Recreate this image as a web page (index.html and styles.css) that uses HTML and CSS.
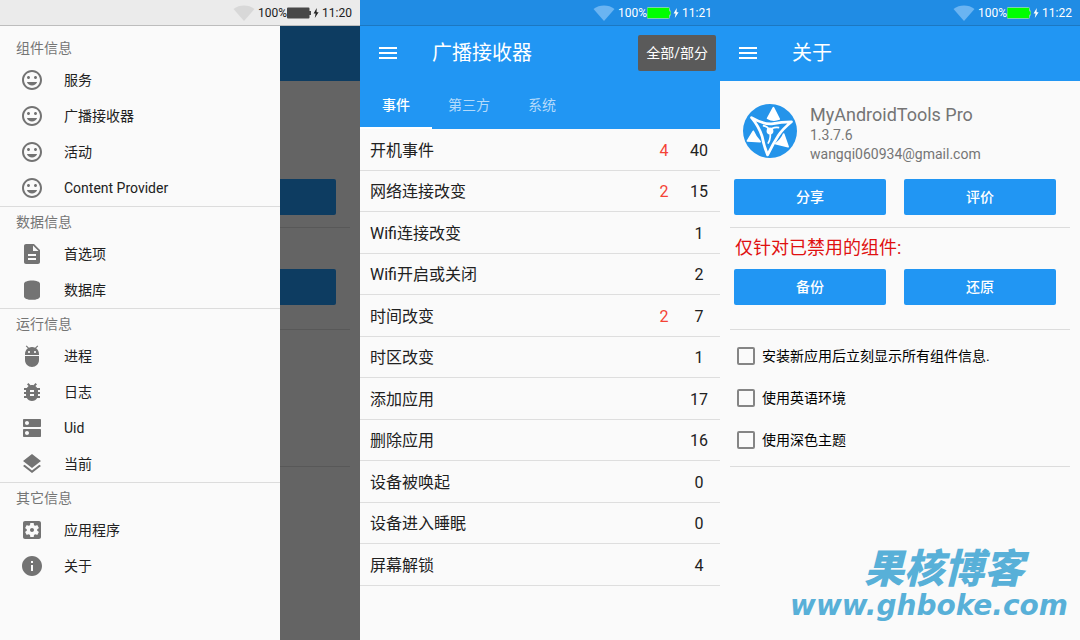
FILE: index.html
```html
<!DOCTYPE html>
<html lang="zh-CN">
<head>
<meta charset="utf-8">
<meta name="viewport" content="width=device-width, initial-scale=1">
<title>MyAndroidTools Pro</title>
<link rel="stylesheet" href="styles.css">
</head>
<body>
<svg class="sprite" aria-hidden="true">
  <symbol id="i-face" viewBox="0 0 24 24"><path d="M11.99 2C6.47 2 2 6.48 2 12s4.47 10 9.99 10C17.52 22 22 17.52 22 12S17.52 2 11.99 2zM12 20c-4.42 0-8-3.58-8-8s3.58-8 8-8 8 3.58 8 8-3.58 8-8 8zm3.5-9c.83 0 1.5-.67 1.5-1.5S16.33 8 15.5 8 14 8.67 14 9.5s.67 1.5 1.5 1.5zm-7 0c.83 0 1.5-.67 1.5-1.5S9.33 8 8.5 8 7 8.67 7 9.5 7.67 11 8.5 11zm3.5 6.5c2.33 0 4.31-1.46 5.11-3.5H6.89c.8 2.04 2.78 3.5 5.11 3.5z"/></symbol>
  <symbol id="i-doc" viewBox="0 0 24 24"><path d="M14 2H6c-1.1 0-1.99.9-1.99 2L4 20c0 1.1.89 2 1.99 2H18c1.1 0 2-.9 2-2V8l-6-6zm2 16H8v-2h8v2zm0-4H8v-2h8v2zm-3-5V3.5L18.5 9H13z"/></symbol>
  <symbol id="i-db" viewBox="0 0 24 24"><path d="M4 5.6C4 3.7 7.6 2.4 12 2.4s8 1.3 8 3.2v12.8c0 1.9-3.6 3.4-8 3.4s-8-1.5-8-3.4z"/></symbol>
  <symbol id="i-adb" viewBox="0 0 24 24"><path d="M5 16c0 3.87 3.13 7 7 7s7-3.13 7-7v-4H5v4zM16.12 4.37l2.1-2.1-.82-.83-2.3 2.31C14.16 3.28 13.12 3 12 3s-2.16.28-3.09.75L6.6 1.44l-.82.83 2.1 2.1C6.14 5.64 5 7.68 5 10v1h14v-1c0-2.32-1.14-4.36-2.88-5.63zM9 9c-.55 0-1-.45-1-1s.45-1 1-1 1 .45 1 1-.45 1-1 1zm6 0c-.55 0-1-.45-1-1s.45-1 1-1 1 .45 1 1-.45 1-1 1z"/></symbol>
  <symbol id="i-bug" viewBox="0 0 24 24"><path d="M20 8h-2.81c-.45-.78-1.07-1.45-1.82-1.96L17 4.41 15.59 3l-2.17 2.17C12.96 5.06 12.49 5 12 5c-.49 0-.96.06-1.41.17L8.41 3 7 4.41l1.62 1.63C7.88 6.55 7.26 7.22 6.81 8H4v2h2.09c-.05.33-.09.66-.09 1v1H4v2h2v1c0 .34.04.67.09 1H4v2h2.81c1.04 1.79 2.97 3 5.19 3s4.15-1.21 5.19-3H20v-2h-2.09c.05-.33.09-.66.09-1v-1h2v-2h-2v-1c0-.34-.04-.67-.09-1H20V8zm-6 8h-4v-2h4v2zm0-4h-4v-2h4v2z"/></symbol>
  <symbol id="i-dns" viewBox="0 0 24 24"><path d="M20 13H4c-.55 0-1 .45-1 1v6c0 .55.45 1 1 1h16c.55 0 1-.45 1-1v-6c0-.55-.45-1-1-1zM7 19c-1.1 0-2-.9-2-2s.9-2 2-2 2 .9 2 2-.9 2-2 2zM20 3H4c-.55 0-1 .45-1 1v6c0 .55.45 1 1 1h16c.55 0 1-.45 1-1V4c0-.55-.45-1-1-1zM7 9c-1.1 0-2-.9-2-2s.9-2 2-2 2 .9 2 2-.9 2-2 2z"/></symbol>
  <symbol id="i-layers" viewBox="0 0 24 24"><path d="M11.99 18.54l-7.37-5.73L3 14.07l9 7 9-7-1.63-1.27-7.38 5.74zM12 16l7.36-5.73L21 9l-9-7-9 7 1.63 1.27L12 16z"/></symbol>
  <symbol id="i-apps" viewBox="0 0 24 24"><path d="M12 10c-1.1 0-2 .9-2 2s.9 2 2 2 2-.9 2-2-.9-2-2-2zm7-7H5c-1.11 0-2 .9-2 2v14c0 1.1.89 2 2 2h14c1.11 0 2-.9 2-2V5c0-1.1-.89-2-2-2zm-1.75 9c0 .23-.02.46-.05.68l1.48 1.16c.13.11.17.3.08.45l-1.4 2.42c-.09.15-.27.21-.43.15l-1.74-.7c-.36.28-.76.51-1.18.69l-.26 1.85c-.03.17-.18.3-.35.3h-2.8c-.17 0-.32-.13-.35-.29l-.26-1.85c-.43-.18-.82-.41-1.18-.69l-1.74.7c-.16.06-.34 0-.43-.15l-1.4-2.42c-.09-.15-.05-.34.08-.45l1.48-1.16c-.03-.23-.05-.46-.05-.69 0-.23.02-.46.05-.68l-1.48-1.16c-.13-.11-.17-.3-.08-.45l1.4-2.42c.09-.15.27-.21.43-.15l1.74.7c.36-.28.76-.51 1.18-.69l.26-1.85c.03-.17.18-.3.35-.3h2.8c.17 0 .32.13.35.29l.26 1.85c.43.18.82.41 1.18.69l1.74-.7c.16-.06.34 0 .43.15l1.4 2.42c.09.15.05.34-.08.45l-1.48 1.16c.03.23.05.46.05.69z"/></symbol>
  <symbol id="i-info" viewBox="0 0 24 24"><path d="M12 2C6.48 2 2 6.48 2 12s4.48 10 10 10 10-4.48 10-10S17.52 2 12 2zm1 15h-2v-6h2v6zm0-8h-2V7h2v2z"/></symbol>
  <symbol id="i-menu" viewBox="0 0 24 24"><path d="M3 18h18v-2H3v2zm0-5h18v-2H3v2zm0-7v2h18V6H3z"/></symbol>
  <symbol id="i-wifi" viewBox="0 0 22 16"><path d="M.5 4C6.5-.6 15.5-.6 21.5 4L11 16z"/></symbol>
  <symbol id="i-battery" viewBox="0 0 24 12"><path d="M1 .5h20.5q1 0 1 1V4H24v4h-1.500v2.500q0 1-1 1H1q-1 0-1-1v-9q0-1 1-1z"/></symbol>
  <symbol id="i-bolt" viewBox="0 0 6 10"><path d="M3.700 0L.6 5.400h2L1.800 10 5.600 4.200h-2z"/></symbol>
</svg>

<main class="screens">
  <section class="phone">
    <div class="status status-light">
      <svg class="wifi"><use href="#i-wifi"/></svg><span>100%</span><svg class="battery"><use href="#i-battery"/></svg><svg class="bolt"><use href="#i-bolt"/></svg><span>11:20</span>
    </div>
    <div class="split">
      <nav class="drawer">
        <div class="group">
          <h2 class="group-title">组件信息</h2>
          <a class="item" href="#"><svg class="icon"><use href="#i-face"/></svg>服务</a>
          <a class="item" href="#"><svg class="icon"><use href="#i-face"/></svg>广播接收器</a>
          <a class="item" href="#"><svg class="icon"><use href="#i-face"/></svg>活动</a>
          <a class="item" href="#"><svg class="icon"><use href="#i-face"/></svg>Content Provider</a>
        </div>
        <div class="group">
          <h2 class="group-title">数据信息</h2>
          <a class="item" href="#"><svg class="icon"><use href="#i-doc"/></svg>首选项</a>
          <a class="item" href="#"><svg class="icon"><use href="#i-db"/></svg>数据库</a>
        </div>
        <div class="group">
          <h2 class="group-title">运行信息</h2>
          <a class="item" href="#"><svg class="icon"><use href="#i-adb"/></svg>进程</a>
          <a class="item" href="#"><svg class="icon"><use href="#i-bug"/></svg>日志</a>
          <a class="item" href="#"><svg class="icon"><use href="#i-dns"/></svg>Uid</a>
          <a class="item" href="#"><svg class="icon"><use href="#i-layers"/></svg>当前</a>
        </div>
        <div class="group">
          <h2 class="group-title">其它信息</h2>
          <a class="item" href="#"><svg class="icon"><use href="#i-apps"/></svg>应用程序</a>
          <a class="item" href="#"><svg class="icon"><use href="#i-info"/></svg>关于</a>
        </div>
      </nav>
      <div class="scrim" aria-hidden="true">
        <div class="scrim-bar"></div>
        <div class="scrim-profile"></div>
        <div class="scrim-button"></div>
        <div class="scrim-line"></div>
        <div class="scrim-label"></div>
        <div class="scrim-button"></div>
        <div class="scrim-line scrim-line-far"></div>
        <div class="scrim-options"></div>
        <div class="scrim-line"></div>
      </div>
    </div>
  </section>

  <section class="phone">
    <div class="status">
      <svg class="wifi"><use href="#i-wifi"/></svg><span>100%</span><svg class="battery"><use href="#i-battery"/></svg><svg class="bolt"><use href="#i-bolt"/></svg><span>11:21</span>
    </div>
    <header class="bar">
      <button class="menu" type="button" aria-label="菜单"><svg class="icon"><use href="#i-menu"/></svg></button>
      <h1 class="bar-title">广播接收器</h1>
      <button class="toggle" type="button">全部/部分</button>
    </header>
    <div class="tabs" role="tablist">
      <button class="tab tab-active" type="button" role="tab" aria-selected="true">事件</button>
      <button class="tab" type="button" role="tab" aria-selected="false">第三方</button>
      <button class="tab" type="button" role="tab" aria-selected="false">系统</button>
    </div>
    <table class="events">
      <tbody>
        <tr><td>开机事件</td><td class="off">4</td><td class="count">40</td></tr>
        <tr><td>网络连接改变</td><td class="off">2</td><td class="count">15</td></tr>
        <tr><td>Wifi连接改变</td><td class="off"></td><td class="count">1</td></tr>
        <tr><td>Wifi开启或关闭</td><td class="off"></td><td class="count">2</td></tr>
        <tr><td>时间改变</td><td class="off">2</td><td class="count">7</td></tr>
        <tr><td>时区改变</td><td class="off"></td><td class="count">1</td></tr>
        <tr><td>添加应用</td><td class="off"></td><td class="count">17</td></tr>
        <tr><td>删除应用</td><td class="off"></td><td class="count">16</td></tr>
        <tr><td>设备被唤起</td><td class="off"></td><td class="count">0</td></tr>
        <tr><td>设备进入睡眠</td><td class="off"></td><td class="count">0</td></tr>
        <tr><td>屏幕解锁</td><td class="off"></td><td class="count">4</td></tr>
      </tbody>
    </table>
  </section>

  <section class="phone">
    <div class="status">
      <svg class="wifi"><use href="#i-wifi"/></svg><span>100%</span><svg class="battery"><use href="#i-battery"/></svg><svg class="bolt"><use href="#i-bolt"/></svg><span>11:22</span>
    </div>
    <header class="bar">
      <button class="menu" type="button" aria-label="菜单"><svg class="icon"><use href="#i-menu"/></svg></button>
      <h1 class="bar-title">关于</h1>
    </header>
    <div class="about">
      <div class="profile">
        <svg class="logo" viewBox="26 28 158 158" aria-hidden="true">
          <circle cx="105" cy="107" r="79" fill="#2494ea"/>
          <g fill="#fff" stroke="#fff" stroke-width="5" stroke-linejoin="round">
            <path d="M115 39L132 72Q114 79 98 70z"/>
            <path d="M39 136L56 108Q63 125 76 138z"/>
            <path d="M158 153L122 144Q139 132 145 116z"/>
          </g>
          <g fill="none" stroke="#fff" stroke-width="8" stroke-linejoin="round">
            <path d="M51 68Q86 88 110 86Q138 80 168 80Q142 101 129 121Q113 146 98 177Q86 147 82 123Q72 93 51 68z"/>
          </g>
          <path d="M84 91Q98 92 104 106Q112 94 132 97M104 106Q110 125 99 144" fill="none" stroke="#fff" stroke-width="5"/>
          <circle cx="105" cy="107" r="10" fill="#fff"/>
        </svg>
        <div class="profile-text">
          <h2 class="app-name">MyAndroidTools Pro</h2>
          <p class="meta">1.3.7.6</p>
          <p class="meta">wangqi060934@gmail.com</p>
        </div>
      </div>
      <div class="actions">
        <button class="action" type="button">分享</button>
        <button class="action" type="button">评价</button>
      </div>
      <hr class="rule">
      <p class="notice">仅针对已禁用的组件:</p>
      <div class="actions">
        <button class="action" type="button">备份</button>
        <button class="action" type="button">还原</button>
      </div>
      <hr class="rule rule-far">
      <div class="options">
        <label class="option"><input class="check" type="checkbox">安装新应用后立刻显示所有组件信息.</label>
        <label class="option"><input class="check" type="checkbox">使用英语环境</label>
        <label class="option"><input class="check" type="checkbox">使用深色主题</label>
      </div>
      <hr class="rule rule-end">
    </div>
    <footer class="mark">
      <span class="mark-name">果核博客</span>
      <span class="mark-url">www.ghboke.com</span>
    </footer>
  </section>
</main>
</body>
</html>
```
FILE: styles.css
```css
* {
  box-sizing: border-box;
}

body {
  margin: 0;
  background: #fafafa;
  color: #212121;
  font-family: Roboto, "Noto Sans CJK SC", sans-serif;
  font-size: 14px;
  line-height: 20px;
}

h1, h2, p {
  margin: 0;
  font-weight: 400;
}

button {
  border: 0;
  padding: 0;
  font: inherit;
  color: inherit;
  background: none;
}

svg {
  display: block;
  fill: currentColor;
}

.sprite {
  display: none;
}

.screens {
  display: grid;
  grid-template-columns: repeat(3, 1fr);
  min-height: 100vh;
}

.phone {
  display: flex;
  flex-direction: column;
}

/* Status bar */
.status {
  display: flex;
  align-items: center;
  justify-content: flex-end;
  height: 26px;
  padding-right: 8px;
  border-bottom: 1px solid #1c78c2;
  background: #208ce4;
  color: #fff;
  font-size: 12px;
}

.status-light {
  border-color: #bdbdbd;
  background: #ebebeb;
  color: #212121;
}

.wifi {
  width: 22px;
  height: 16px;
  margin-right: 3px;
  color: #6ab4f2;
}

.status-light .wifi {
  color: #d8d8d8;
}

.battery {
  width: 24px;
  height: 12px;
  color: #0f0;
  stroke: #7fd0b0;
  stroke-width: 1px;
}

.status-light .battery {
  color: #484848;
  stroke: none;
}

.bolt {
  width: 6px;
  height: 10px;
  margin: 0 3px 0 2px;
}

/* Navigation drawer over the dimmed screen */
.split {
  display: flex;
  flex: 1;
}

.drawer {
  flex: 0 0 280px;
  padding-top: 7px;
}

.group + .group {
  border-top: 1px solid #dcdcdc;
}

.group-title {
  padding: 2px 0 0 16px;
  color: #757575;
  font-size: 14px;
  line-height: 27px;
}

.item {
  display: flex;
  align-items: center;
  gap: 20px;
  height: 36px;
  padding-left: 20px;
  color: #212121;
  text-decoration: none;
}

.icon {
  width: 24px;
  height: 24px;
}

.item .icon {
  color: #737373;
}

.scrim {
  flex: 1;
  background: #646464;
}

.scrim-bar {
  height: 55px;
  background: #0d3c61;
}

.scrim-profile {
  height: 98px;
}

.scrim-button {
  height: 36px;
  margin-right: 24px;
  border-radius: 0 2px 2px 0;
  background: #0d3c61;
}

.scrim-line {
  height: 1px;
  margin: 12px 10px 0 0;
  background: #585858;
}

.scrim-line-far {
  margin-top: 24px;
}

.scrim-label {
  height: 41px;
}

.scrim-options {
  height: 124px;
}

/* App bar and tabs */
.bar {
  display: flex;
  align-items: center;
  height: 55px;
  padding: 0 4px 1px 16px;
  background: #2196f3;
  color: #fff;
}

.menu {
  margin-right: 32px;
}

.bar-title {
  flex: 1;
  font-size: 20px;
  line-height: 28px;
}

.toggle {
  height: 36px;
  padding: 0 8px;
  border-radius: 2px;
  background: #5a5a5a;
}

.tabs {
  display: flex;
  height: 48px;
  background: #2196f3;
}

.tab {
  min-width: 72px;
  padding: 2px 16px 0;
  border-bottom: 2px solid transparent;
  color: #b3dafb;
}

.tab-active {
  border-bottom-color: #fff;
  color: #fff;
  font-weight: 500;
}

/* Event list */
.events {
  width: 100%;
  border-spacing: 0;
  font-size: 16px;
}

.events td {
  height: 42px;
  padding: 2px 0 0 10px;
  border-bottom: 1px solid #dedede;
}

.events tr:nth-child(even) td {
  height: 41px;
}

.events .off,
.events .count {
  width: 28px;
  padding: 2px 0 0;
  text-align: center;
}

.events .off {
  color: #f44336;
}

.events .count {
  width: 42px;
}

/* About screen */
.about {
  padding: 23px 10px 0;
}

.profile {
  display: flex;
  gap: 13px;
  height: 75px;
  padding-left: 13px;
  color: #757575;
}

.logo {
  width: 54px;
  height: 54px;
}

.app-name {
  font-size: 18px;
  line-height: 22px;
}

.meta {
  line-height: 19px;
}

.actions {
  display: grid;
  grid-template-columns: 1fr 1fr;
  gap: 18px;
  padding: 0 14px 0 4px;
}

.action {
  height: 36px;
  border-radius: 2px;
  background: #2196f3;
  color: #fff;
  font-weight: 500;
}

.rule {
  height: 1px;
  margin: 12px 0 0;
  border: 0;
  background: #dcdcdc;
}

.rule-far {
  margin-top: 24px;
}

.rule-end {
  margin-top: 5px;
}

.notice {
  padding: 6px 5px 7px;
  color: #e01010;
  font-size: 18px;
  line-height: 28px;
}

.options {
  padding-top: 5px;
}

.option {
  display: flex;
  align-items: center;
  gap: 7px;
  height: 42px;
  padding-left: 7px;
  color: #000;
}

.check {
  appearance: none;
  width: 18px;
  height: 18px;
  margin: 0;
  border: 2px solid #858585;
  border-radius: 2px;
}

.mark {
  display: flex;
  flex-direction: column;
  align-items: flex-end;
  gap: 4px;
  margin-top: auto;
  padding: 0 12px 18px 0;
  color: #58b0d8;
  font-style: italic;
  font-weight: 700;
}

.mark-name {
  padding-right: 44px;
  font-family: "Noto Sans CJK SC", sans-serif;
  font-size: 40px;
  font-weight: 900;
  line-height: 40px;
}

.mark-url {
  font-family: "DejaVu Sans", sans-serif;
  font-size: 28px;
  line-height: 32px;
}
```
